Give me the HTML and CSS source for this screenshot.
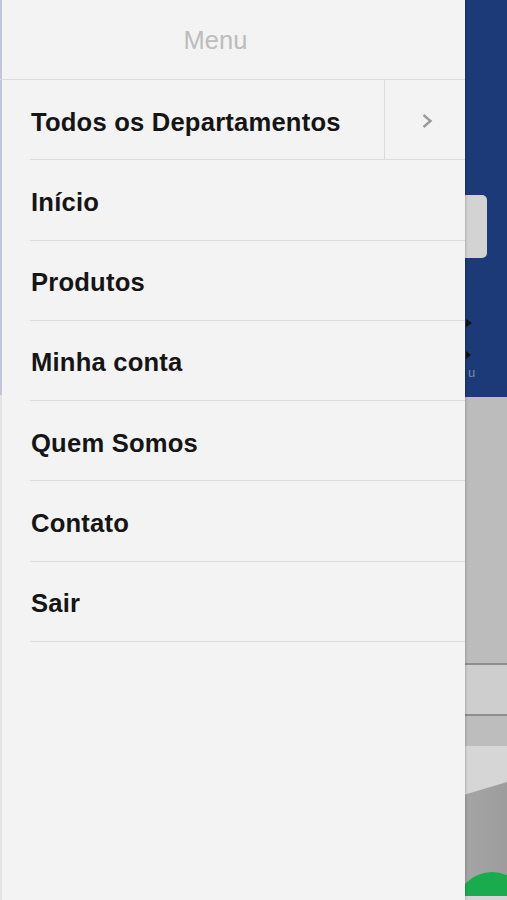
FILE: index.html
```html
<!DOCTYPE html>
<html lang="pt-BR">
<head>
<meta charset="utf-8">
<title>Menu</title>
<link rel="stylesheet" href="styles.css">
</head>
<body>
<div class="page">
  <header class="page-header">
    <div class="search"></div>
    <div class="header-icons">
      <svg class="hicons" width="41" height="62" viewBox="0 0 41 62">
        <path d="M0 1 L6 5 L0 9 Z" fill="#111"/>
        <path d="M0 33 L5 37 L0 41 Z" fill="#111"/>
        <text x="2" y="59" font-family="Liberation Sans, Arial, sans-serif" font-size="13" fill="#7d88ad">u</text>
      </svg>
    </div>
  </header>
  <section class="page-body">
    <div class="grey-block"></div>
    <div class="band"></div>
    <div class="grey-strip"></div>
    <svg class="banner" width="507" height="150" viewBox="0 0 507 150">
      <defs>
        <linearGradient id="g1" x1="0" y1="0" x2="1" y2="0">
          <stop offset="0" stop-color="#a9a9a9"/>
          <stop offset="1" stop-color="#9d9d9d"/>
        </linearGradient>
      </defs>
      <rect width="507" height="150" fill="#d6d6d6"/>
      <path d="M440 56 L507 36 L507 150 L440 150 Z" fill="url(#g1)"/>
      <circle cx="492" cy="162" r="36" fill="#1aab4e"/>
    </svg>
  </section>
</div>

<nav class="drawer">
  <div class="drawer-title">Menu</div>
  <ul class="menu">
    <li class="item">
      <a class="label" href="#">Todos os Departamentos</a>
      <span class="arrow">
        <svg width="12" height="16" viewBox="0 0 12 16"><path d="M2.5 2 L9.5 8 L2.5 14" fill="none" stroke="#9b9b9b" stroke-width="2.4"/></svg>
      </span>
    </li>
    <li class="item"><a class="label" href="#">Início</a></li>
    <li class="item"><a class="label" href="#">Produtos</a></li>
    <li class="item"><a class="label" href="#">Minha conta</a></li>
    <li class="item"><a class="label" href="#">Quem Somos</a></li>
    <li class="item"><a class="label" href="#">Contato</a></li>
    <li class="item"><a class="label" href="#">Sair</a></li>
  </ul>
</nav>
</body>
</html>
```

FILE: styles.css
```css
* { box-sizing: border-box; }

html, body {
  margin: 0;
  padding: 0;
}

body {
  width: 507px;
  height: 900px;
  overflow: hidden;
  position: relative;
  font-family: "Liberation Sans", Arial, sans-serif;
  background: #d6d6d6;
}

/* page behind the drawer */
.page {
  display: flex;
  flex-direction: column;
}

.page-header {
  height: 397px;
  background: #1c3a78;
  padding-top: 195px;
  display: flex;
  flex-direction: column;
}

.search {
  height: 63px;
  margin-left: 16px;
  margin-right: 20px;
  border-radius: 5px;
  background: linear-gradient(to right, #c4c4c4, #d3d3d3);
}

.header-icons {
  margin-top: 60px;
  display: flex;
  justify-content: flex-end;
}

.hicons { display: block; }

.page-body {
  display: flex;
  flex-direction: column;
}

.grey-block {
  height: 268px;
  background: #bcbcbc;
  border-bottom: 2px solid #8e8e8e;
}

.band {
  height: 51px;
  background: #cecece;
  border-bottom: 2px solid #8e8e8e;
}

.grey-strip {
  height: 30px;
  background: #bdbdbd;
}

.banner { display: block; }

/* drawer overlay */
.drawer {
  position: absolute;
  left: 0;
  top: 0;
  width: 465px;
  height: 900px;
  background:
    linear-gradient(to bottom, #c2c5d8 395px, #e4e4e4 395px) left top / 2px 100% no-repeat,
    #f3f3f3;
  box-shadow: 1px 0 2px rgba(0, 0, 0, 0.18);
}

.drawer-title {
  height: 80px;
  border-bottom: 1px solid #dcdcdc;
  display: flex;
  align-items: center;
  justify-content: center;
  padding-right: 34px;
  padding-top: 2px;
  font-size: 25.5px;
  color: #bcbcbc;
}

.menu {
  list-style: none;
  margin: 0;
  padding: 0;
}

.item {
  height: 80.25px;
  margin-left: 30px;
  border-bottom: 1px solid #dcdcdc;
  display: flex;
  align-items: stretch;
}

.label {
  flex: 1;
  display: flex;
  align-items: center;
  padding-left: 1px;
  padding-top: 5px;
  font-size: 25.6px;
  font-weight: bold;
  letter-spacing: 0.2px;
  color: #151515;
  text-decoration: none;
}

.arrow {
  width: 81px;
  border-left: 1px solid #dcdcdc;
  display: flex;
  align-items: center;
  justify-content: center;
  padding-left: 3px;
  padding-top: 3px;
}

.arrow svg { display: block; }
```
